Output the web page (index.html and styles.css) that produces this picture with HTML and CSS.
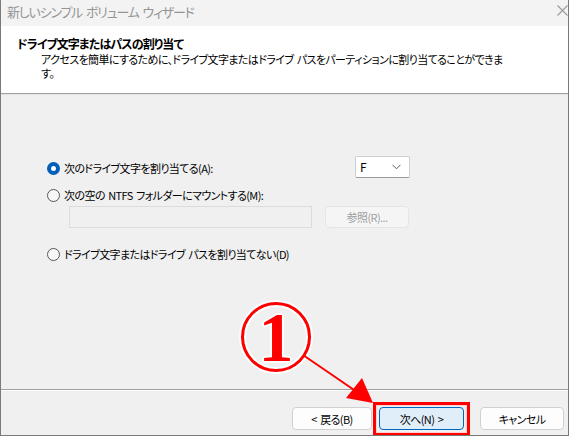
FILE: index.html
```html
<!DOCTYPE html>
<html lang="ja">
<head>
<meta charset="utf-8">
<title>新しいシンプル ボリューム ウィザード</title>
<link rel="stylesheet" href="styles.css">
</head>
<body>
<div class="window">
  <div class="titlebar">
    <span class="title">新しいシンプル ボリューム ウィザード</span>
    <svg class="close" width="11" height="11" viewBox="0 0 11 11"><path d="M0.5 0.5 L10.5 10.5 M10.5 0.5 L0.5 10.5" stroke="#9a9a9a" stroke-width="1.1" fill="none"/></svg>
  </div>
  <div class="header">
    <div class="h-title">ドライブ文字またはパスの割り当て</div>
    <div class="h-sub">アクセスを簡単にするために、ドライブ文字またはドライブ パスをパーティションに割り当てることができます。</div>
  </div>
  <div class="content">
    <div class="row row1">
      <label class="opt"><span class="radio on"></span><span>次のドライブ文字を割り当てる(A):</span></label>
      <div class="combo"><span>F</span><svg width="9" height="6" viewBox="0 0 9 6"><path d="M0.5 0.8 L4.5 4.8 L8.5 0.8" stroke="#5f5f5f" stroke-width="1" fill="none"/></svg></div>
    </div>
    <div class="row row2">
      <label class="opt"><span class="radio"></span><span>次の空の NTFS フォルダーにマウントする(M):</span></label>
    </div>
    <div class="row sub">
      <div class="field"></div>
      <div class="btn disabled">参照(R)...</div>
    </div>
    <div class="row row3">
      <label class="opt"><span class="radio"></span><span>ドライブ文字またはドライブ パスを割り当てない(D)</span></label>
    </div>
  </div>
  <div class="footer">
    <div class="btn back">&lt; 戻る(B)</div>
    <div class="btn next">次へ(N) &gt;</div>
    <div class="btn cancel">キャンセル</div>
  </div>

  <div class="callout"><span class="num">1</span></div>
  <svg class="arrow" width="569" height="436" viewBox="0 0 569 436">
    <line x1="303" y1="355" x2="360" y2="394" stroke="#ff0000" stroke-width="2"/>
    <polygon points="373,403 346,398 362,378" fill="#ff0000"/>
  </svg>
  <div class="highlight"></div>
</div>
</body>
</html>
```

FILE: styles.css
```css
html, body {
  margin: 0;
  padding: 0;
  background: #ffffff;
}
body {
  font-family: "Noto Sans CJK JP", "Noto Sans", sans-serif;
  font-size: 11px;
  font-feature-settings: "palt";
  letter-spacing: -0.6px;
  word-spacing: 1.5px;
  color: #000;
}
.window {
  position: relative;
  width: 567px;
  height: 435px;
  border-left: 1px solid #7a7a7a;
  border-right: 1px solid #7a7a7a;
  border-bottom: 1px solid #7a7a7a;
  background: #f0f0f0;
  display: flex;
  flex-direction: column;
  overflow: hidden;
}
.titlebar {
  height: 26px;
  background: #f3f3f3;
  display: flex;
  align-items: center;
  justify-content: space-between;
  padding-left: 6px;
  padding-right: 0;
  flex: none;
}
.title {
  color: #959595;
  font-size: 13px;
  letter-spacing: -1.2px;
  word-spacing: 2px;
  line-height: 18px;
  margin-top: -3px;
}
.close {
  margin-top: -6px;
  margin-right: 0px;
}
.header {
  background: #ffffff;
  height: 68px;
  box-sizing: border-box;
  padding-top: 9px;
  padding-left: 16px;
  border-bottom: 1px solid #a0a0a0;
  flex: none;
}
.h-title {
  font-size: 12px;
  font-weight: bold;
  line-height: 17px;
  letter-spacing: -0.9px;
}
.h-sub {
  padding-left: 24px;
  width: 462px;
  line-height: 14px;
}
.content {
  flex: 1;
  border-top: 1px solid #e4e4e4;
  border-bottom: 1px solid #a0a0a0;
  padding-top: 62px;
  padding-left: 46px;
  box-sizing: border-box;
}
.row {
  display: flex;
  align-items: center;
}
.row1 {
  width: 363px;
  height: 22px;
  justify-content: space-between;
}
.row2 {
  height: 22px;
  margin-top: 5px;
}
.sub {
  margin-top: 0;
  padding-left: 22px;
  gap: 13px;
  height: 22px;
}
.row3 {
  height: 22px;
  margin-top: 15px;
}
.opt {
  display: flex;
  align-items: center;
  gap: 4px;
  line-height: 16px;
}
.radio {
  width: 13px;
  height: 13px;
  box-sizing: border-box;
  border-radius: 50%;
  border: 1px solid #575757;
  background: #f7f7f7;
  flex: none;
}
.radio.on {
  border: 4px solid #005fb8;
  background: #ffffff;
}
.combo {
  width: 55px;
  height: 22px;
  box-sizing: border-box;
  margin-top: -3px;
  background: #ffffff;
  border: 1px solid #d0d0d0;
  border-bottom-color: #9a9a9a;
  border-radius: 2px;
  display: flex;
  align-items: center;
  justify-content: space-between;
  padding: 0 8px 0 4px;
  font-size: 12px;
}
.field {
  width: 243px;
  height: 22px;
  box-sizing: border-box;
  border: 1px solid #dcdcdc;
  background: #f0f0f0;
}
.btn {
  height: 23px;
  box-sizing: border-box;
  border: 1px solid #d0d0d0;
  border-radius: 4px;
  background: #fdfdfd;
  display: flex;
  align-items: center;
  justify-content: center;
  line-height: 16px;
}
.btn.disabled {
  width: 84px;
  height: 22px;
  background: #f5f5f5;
  border-color: #e5e5e5;
  color: #a0a0a0;
}
.footer {
  height: 45px;
  flex: none;
  border-top: 1px solid #ffffff;
  box-sizing: border-box;
  display: flex;
  justify-content: flex-end;
  align-items: flex-start;
  padding-top: 16px;
  padding-right: 4px;
}
.back { width: 80px; }
.next {
  width: 85px;
  margin-left: 7px;
  background: #e0eef9;
  border-color: #0067c0;
}
.cancel {
  width: 84px;
  margin-left: 16px;
}
.highlight {
  position: absolute;
  left: 372px;
  top: 402px;
  width: 97px;
  height: 34px;
  box-sizing: border-box;
  border: 3px solid #ff0000;
  box-shadow: inset 0 0 0 1px #ffd0d0;
}
.callout {
  position: absolute;
  left: 240px;
  top: 302px;
  width: 70px;
  height: 70px;
  box-sizing: border-box;
  border-radius: 50%;
  border: 3px solid #ff0000;
  box-shadow: 0 0 0 2px #ffffff, inset 0 0 0 2px #ffffff;
  display: flex;
  align-items: center;
  justify-content: center;
}
.num {
  font-family: "Liberation Serif", "DejaVu Serif", serif;
  font-weight: bold;
  font-size: 70px;
  line-height: 70px;
  letter-spacing: 0;
  color: #ff0000;
  margin-top: 2px;
  text-shadow: 2px 0 0 #fff, -2px 0 0 #fff, 0 2px 0 #fff, 0 -2px 0 #fff, 1px 1px 0 #fff, -1px -1px 0 #fff, 1px -1px 0 #fff, -1px 1px 0 #fff;
}
.arrow {
  position: absolute;
  left: -1px;
  top: 0;
  pointer-events: none;
}
```
